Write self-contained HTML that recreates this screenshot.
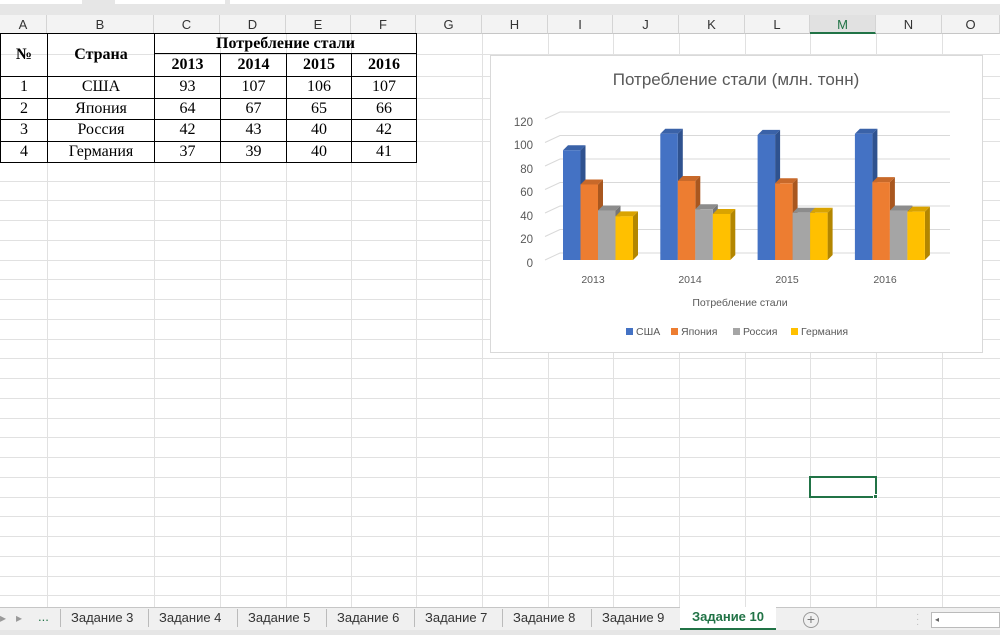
<!DOCTYPE html>
<html><head><meta charset="utf-8"><style>
*{margin:0;padding:0;box-sizing:border-box}
body{width:1000px;height:635px;overflow:hidden;background:#fff;font-family:"Liberation Sans",sans-serif;position:relative}
.abs{position:absolute}
.colh{position:absolute;top:15px;height:19px;border-right:1px solid #d4d4d4;border-bottom:1px solid #c6c6c6;background:#f3f3f3;font-size:13px;color:#333;text-align:center;line-height:19px}
table{position:absolute;left:0;top:33px;border-collapse:collapse;font-family:"Liberation Serif",serif;font-size:16px}
td{border:1px solid #000;text-align:center;padding:0;height:21.5px}
</style></head><body>
<div class="abs" style="left:0;top:0;width:1000px;height:15px;background:#e6e6e6"></div>
<div class="abs" style="left:0;top:0;width:82px;height:4px;background:#fff"></div>
<div class="abs" style="left:115px;top:0;width:110px;height:4px;background:#fff"></div>
<div class="abs" style="left:230px;top:0;width:770px;height:4px;background:#fff"></div>
<svg class="abs" style="left:0;top:34px" width="1000" height="573">
<g stroke="#e1e1e1" stroke-width="1">
<path d="M47.5 0V573M154.5 0V573M220.5 0V573M286.5 0V573M351.5 0V573M416.5 0V573M482.5 0V573M548.5 0V573M613.5 0V573M679.5 0V573M745.5 0V573M810.5 0V573M876.5 0V573M942.5 0V573"/>
<path d="M0 147.5H1000M0 166.5H1000M0 186.5H1000M0 206.5H1000M0 226.5H1000M0 245.5H1000M0 265.5H1000M0 285.5H1000M0 305.5H1000M0 324.5H1000M0 344.5H1000M0 364.5H1000M0 384.5H1000M0 403.5H1000M0 423.5H1000M0 443.5H1000M0 463.5H1000M0 482.5H1000M0 502.5H1000M0 522.5H1000M0 542.5H1000M0 561.5H1000M0 20.5H1000M0 42.5H1000M0 64.5H1000M0 85.5H1000M0 107.5H1000"/>
</g></svg>
<div class="colh" style="left:0;width:47px">A</div>
<div class="colh" style="left:47px;width:107px">B</div>
<div class="colh" style="left:154px;width:66px">C</div>
<div class="colh" style="left:220px;width:66px">D</div>
<div class="colh" style="left:286px;width:65px">E</div>
<div class="colh" style="left:351px;width:65px">F</div>
<div class="colh" style="left:416px;width:66px">G</div>
<div class="colh" style="left:482px;width:66px">H</div>
<div class="colh" style="left:548px;width:65px">I</div>
<div class="colh" style="left:613px;width:66px">J</div>
<div class="colh" style="left:679px;width:66px">K</div>
<div class="colh" style="left:745px;width:65px">L</div>
<div class="colh" style="left:810px;width:66px;background:#e1e1e1;color:#217346;border-bottom:2px solid #217346">M</div>
<div class="colh" style="left:876px;width:66px">N</div>
<div class="colh" style="left:942px;width:58px">O</div>
<table>
<tr><td rowspan="2" style="width:47px;font-weight:bold">№</td><td rowspan="2" style="width:107px;font-weight:bold">Страна</td><td colspan="4" style="font-weight:bold;height:20px">Потребление стали</td></tr>
<tr style="font-weight:bold"><td style="width:66px;height:23px">2013</td><td style="width:66px">2014</td><td style="width:65px">2015</td><td style="width:65px">2016</td></tr>
<tr><td>1</td><td>США</td><td>93</td><td>107</td><td>106</td><td>107</td></tr>
<tr><td>2</td><td>Япония</td><td>64</td><td>67</td><td>65</td><td>66</td></tr>
<tr><td>3</td><td>Россия</td><td>42</td><td>43</td><td>40</td><td>42</td></tr>
<tr><td>4</td><td>Германия</td><td>37</td><td>39</td><td>40</td><td>41</td></tr>
</table>
<div class="abs" style="left:809px;top:476px;width:68px;height:22px;border:2px solid #217346"></div>
<div class="abs" style="left:873px;top:494px;width:5px;height:5px;background:#217346;border:1px solid #fff"></div>
<svg class="abs" style="left:490px;top:55px" width="493" height="298" font-family="Liberation Sans, sans-serif">
<rect x="0.5" y="0.5" width="492" height="297" fill="#fff" stroke="#d9d9d9"/>
<text x="246" y="30" font-size="17" fill="#595959" text-anchor="middle">Потребление стали (млн. тонн)</text>
<g stroke="#d9d9d9" fill="none">
<path d="M55 205L70 198H460M55 181.5L70 174.5H460M55 158L70 151H460M55 134.5L70 127.5H460M55 111L70 104H460M55 87.5L70 80.5H460M55 64L70 57H460"/>
</g>
<g font-size="11.5" fill="#595959" text-anchor="end">
<text x="43" y="212">0</text><text x="43" y="188">20</text><text x="43" y="165">40</text><text x="43" y="141">60</text><text x="43" y="118">80</text><text x="43" y="94">100</text><text x="43" y="71">120</text>
</g>
<g font-size="10.5" fill="#595959" text-anchor="middle">
<text x="103" y="228">2013</text><text x="200" y="228">2014</text><text x="297" y="228">2015</text><text x="395" y="228">2016</text>
<text x="250" y="251">Потребление стали</text>
</g>
<g font-size="10.5" fill="#595959">
<rect x="136" y="273" width="7" height="7" fill="#4472c4"/><text x="146" y="280">США</text>
<rect x="181" y="273" width="7" height="7" fill="#ed7d31"/><text x="191" y="280">Япония</text>
<rect x="243" y="273" width="7" height="7" fill="#a5a5a5"/><text x="253" y="280">Россия</text>
<rect x="301" y="273" width="7" height="7" fill="#ffc000"/><text x="311" y="280">Германия</text>
</g>
<g id="b"></g>
</svg>
<script>
var d=[[93,64,42,37],[107,67,43,39],[106,65,40,40],[107,66,42,41]];
var c=[["#4472c4","#2f528f","#3a62a8"],["#ed7d31","#a9571f","#c8692a"],["#a5a5a5","#767676","#8c8c8c"],["#ffc000","#b38600","#d9a300"]];
var s="",base=205,k=1.18,w=17.5,dx=5,dy=-5;
for(var g=0;g<4;g++){for(var i=0;i<4;i++){var x=73+g*97.3+i*w,h=d[g][i]*k,t=base-h;
s+='<polygon points="'+(x+w)+','+t+' '+(x+w+dx)+','+(t+dy)+' '+(x+w+dx)+','+(base+dy)+' '+(x+w)+','+base+'" fill="'+c[i][1]+'"/>';
s+='<polygon points="'+x+','+t+' '+(x+dx)+','+(t+dy)+' '+(x+w+dx)+','+(t+dy)+' '+(x+w)+','+t+'" fill="'+c[i][2]+'"/>';
s+='<rect x="'+x+'" y="'+t+'" width="'+w+'" height="'+h+'" fill="'+c[i][0]+'"/>';}}
document.getElementById("b").innerHTML=s;
</script>
<div class="abs" style="left:0;top:607px;width:1000px;height:28px;background:#f0f0f0;border-top:1px solid #c6c6c6"></div>
<div class="abs" style="left:0;top:630px;width:1000px;height:5px;background:#e6e6e6"></div>
<div class="abs" style="left:0;top:611px;font-size:12px;color:#999">▸ &nbsp; ▸</div>
<div class="abs" style="left:38px;top:609px;font-size:13px;color:#217346">...</div>
<div class="abs" style="top:609px;left:60px;font-size:13px;color:#333;line-height:18px">
<span style="position:absolute;left:0;border-left:1px solid #bbb;padding-left:10px;white-space:nowrap">Задание 3</span>
<span style="position:absolute;left:88px;border-left:1px solid #bbb;padding-left:10px;white-space:nowrap">Задание 4</span>
<span style="position:absolute;left:177px;border-left:1px solid #bbb;padding-left:10px;white-space:nowrap">Задание 5</span>
<span style="position:absolute;left:266px;border-left:1px solid #bbb;padding-left:10px;white-space:nowrap">Задание 6</span>
<span style="position:absolute;left:354px;border-left:1px solid #bbb;padding-left:10px;white-space:nowrap">Задание 7</span>
<span style="position:absolute;left:442px;border-left:1px solid #bbb;padding-left:10px;white-space:nowrap">Задание 8</span>
<span style="position:absolute;left:531px;border-left:1px solid #bbb;padding-left:10px;white-space:nowrap">Задание 9</span>
</div>
<div class="abs" style="left:680px;top:607px;width:96px;height:23px;background:#fff;border-bottom:2px solid #217346;color:#217346;font-weight:bold;font-size:13px;text-align:center;line-height:20px">Задание 10</div>
<div class="abs" style="left:803px;top:612px;width:16px;height:16px;border:1px solid #999;border-radius:50%;color:#777;font-size:14px;line-height:13px;text-align:center">+</div>
<div class="abs" style="left:916px;top:612px;color:#bbb;font-size:10px;line-height:5px">·<br>·<br>·</div>
<div class="abs" style="left:931px;top:612px;width:69px;height:16px;background:#fff;border:1px solid #bbb;font-size:8px;color:#666;padding-left:3px;line-height:14px">◂</div>
</body></html>
